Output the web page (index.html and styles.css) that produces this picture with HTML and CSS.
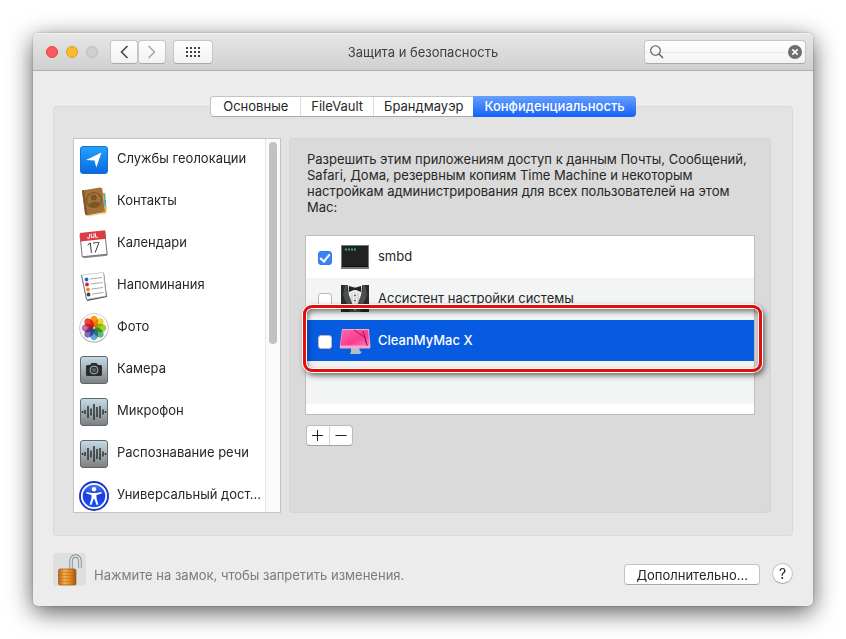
FILE: index.html
```html
<!DOCTYPE html>
<html lang="ru">
<head>
<meta charset="utf-8">
<meta name="viewport" content="width=device-width, initial-scale=1">
<title>Защита и безопасность</title>
<link rel="stylesheet" href="styles.css">
</head>
<body>
<main class="window">
  <header class="titlebar">
    <div class="tools">
      <div class="lights">
        <button class="light close" aria-label="Закрыть"></button>
        <button class="light minimize" aria-label="Свернуть"></button>
        <button class="light zoom" aria-label="Развернуть" disabled></button>
      </div>
      <div class="nav">
        <button class="tool" aria-label="Назад"><svg width="12" height="14" viewBox="0 0 12 14"><path d="M9.500 1 3.500 7l6 6" fill="none" stroke="#484848" stroke-width="1.600"/></svg></button>
        <button class="tool" aria-label="Вперед"><svg width="12" height="14" viewBox="0 0 12 14"><path d="M2.500 1l6 6-6 6" fill="none" stroke="#aaa" stroke-width="1.600"/></svg></button>
      </div>
      <button class="tool grid-button" aria-label="Показать все"><svg width="16" height="12" viewBox="0 0 16 12"><path d="M1 2h14M1 6h14M1 10h14" fill="none" stroke="#404040" stroke-width="2" stroke-dasharray="2 2"/></svg></button>
    </div>
    <h1 class="title">Защита и безопасность</h1>
    <div class="search">
      <svg width="14" height="14" viewBox="0 0 14 14"><circle cx="5.500" cy="5.500" r="4.800" fill="none" stroke="#555" stroke-width="1.100"/><path d="m9 9 4 4" stroke="#555" stroke-width="1.300"/></svg>
      <input type="text" aria-label="Поиск">
      <button class="clear" aria-label="Очистить"><svg width="14" height="14" viewBox="0 0 14 14"><circle cx="7" cy="7" r="7" fill="#6e6e6e"/><path d="m4.300 4.300 5.400 5.400m0-5.400-5.400 5.400" stroke="#fff" stroke-width="1.700"/></svg></button>
    </div>
  </header>

  <div class="content">
    <nav class="tabs">
      <button class="tab">Основные</button>
      <button class="tab">FileVault</button>
      <button class="tab">Брандмауэр</button>
      <button class="tab active">Конфиденциальность</button>
    </nav>

    <section class="group">
      <div class="sidebar">
        <ul class="services">
          <li><svg class="icon" viewBox="0 0 28 28"><defs><linearGradient id="geo" x2="0" y2="1"><stop stop-color="#22a3fb"/><stop offset="1" stop-color="#0a68e4"/></linearGradient></defs><rect x=".5" y=".5" width="27" height="27" rx="2.500" fill="url(#geo)" stroke="#1a72c8"/><path d="M21.500 6.500 6 14l8.500.5 1.800 7z" fill="#fff"/></svg><span>Службы геолокации</span></li>
          <li><svg class="icon" viewBox="0 0 28 28"><path d="m22 4 4 1 .5 17-3 4-2-1z" fill="#e9e4d5"/><path d="m23 5 2 .5.500 6-1.500-1z" fill="#62b15d"/><path d="m24 11 2 1v7l-1.500-1z" fill="#35a9cf"/><path d="m25 18 2 1-1 6-2 1z" fill="#f2bc24"/><path d="m2 2.500 18-3q2 0 2.300 1.500L25 24 7 27.500q-1.500 0-1.800-1.500z" fill="#a27339"/><path d="M2 2.500 4 2l3.500 25L5 26z" fill="#80552a"/><path d="m7 27.500 18-3v1.300L8 28.500z" fill="#eed68d"/><g transform="rotate(-7 14 12)"><circle cx="14" cy="12" r="7.500" fill="#a3733a" stroke="#7d5424" stroke-width="1.200"/><circle cx="14" cy="9.500" r="2.900" fill="#7d5424"/><path d="M8.500 16c1.500-3 9.500-3 11 0-2.500 4-8.500 4-11 0z" fill="#7d5424"/></g></svg><span>Контакты</span></li>
          <li><svg class="icon" viewBox="0 0 28 28"><g transform="rotate(-6 14 14)"><path d="M1 4h25v23H2z" fill="#888"/><path d="M1 4h25v21.500H1z" fill="#fff" stroke="#777"/><path d="M1 1.500h25.500V10H1z" fill="#dc3a44"/><text x="13.500" y="8" class="cal-month">JUL</text><text x="13.500" y="22.500" class="cal-day">17</text></g></svg><span>Календари</span></li>
          <li><svg class="icon" viewBox="0 0 28 28"><path d="M5 4 24 1l3 24-20 4z" fill="#444"/><path d="m1.500 3 22-2.500L26 24 6.500 27.500z" fill="#fff" stroke="#bbb" stroke-width=".7"/><path d="M1.500 3 6.500 27.500" stroke="#777"/><circle cx="6.500" cy="7.500" r="1.900" fill="#1c66de"/><circle cx="7" cy="12.500" r="1.900" fill="#d4222c"/><circle cx="8" cy="17.500" r="1.900" fill="#f38423"/><circle cx="8.500" cy="22.500" r="1.900" fill="#32415c"/><path d="m10 7 12-1.500M10.500 12 22.500 10.500M11.500 17 23 15.500M12 22l11.500-1.500" stroke="#aaa"/></svg><span>Напоминания</span></li>
          <li><svg class="icon" viewBox="0 0 28 28"><circle cx="14" cy="14" r="14.700" fill="#bbb"/><circle cx="14" cy="13.700" r="13.900" fill="#fafafa"/><g class="petals"><ellipse cx="14" cy="7.500" rx="4.200" ry="5.800" fill="#fb9a20"/><ellipse cx="14" cy="7.500" rx="4.200" ry="5.800" fill="#f0dc27" transform="rotate(45 14 14)"/><ellipse cx="14" cy="7.500" rx="4.200" ry="5.800" fill="#a9cf3d" transform="rotate(90 14 14)"/><ellipse cx="14" cy="7.500" rx="4.200" ry="5.800" fill="#58bd84" transform="rotate(135 14 14)"/><ellipse cx="14" cy="7.500" rx="4.200" ry="5.800" fill="#64a9e2" transform="rotate(180 14 14)"/><ellipse cx="14" cy="7.500" rx="4.200" ry="5.800" fill="#866ebc" transform="rotate(225 14 14)"/><ellipse cx="14" cy="7.500" rx="4.200" ry="5.800" fill="#cd6faa" transform="rotate(270 14 14)"/><ellipse cx="14" cy="7.500" rx="4.200" ry="5.800" fill="#f0483c" transform="rotate(315 14 14)"/></g></svg><span>Фото</span></li>
          <li><svg class="icon" viewBox="0 0 28 28"><defs><linearGradient id="steel" x2="0" y2="1"><stop stop-color="#c4dbe6"/><stop offset=".5" stop-color="#a5afb4"/><stop offset="1" stop-color="#7d7d7d"/></linearGradient></defs><rect x=".5" y=".5" width="27" height="27" rx="2.500" fill="url(#steel)" stroke="#5d686e"/><path d="M6 10.500q0-1.500 1.500-1.500H10l1.500-2h5L18 9h2.500q1.500 0 1.500 1.500v8q0 1.500-1.500 1.500h-13Q6 20 6 18.500z" fill="#2a2d2f"/><circle cx="14" cy="14" r="4" fill="#33383b" stroke="#a4aeb3"/><circle cx="14" cy="14" r="2" fill="#596167"/></svg><span>Камера</span></li>
          <li><svg class="icon" viewBox="0 0 28 28"><rect x=".5" y=".5" width="27" height="27" rx="2.500" fill="url(#steel)" stroke="#5d686e"/><path d="M2.500 13v2M5 12v4M8 8v12M11 10.500v7M14 6v16M17 9v10M20 8v12M23 11.500v5M25.500 13v2" stroke="#2c3033" stroke-width="1.500"/></svg><span>Микрофон</span></li>
          <li><svg class="icon" viewBox="0 0 28 28"><rect x=".5" y=".5" width="27" height="27" rx="2.500" fill="url(#steel)" stroke="#5d686e"/><path d="M2.500 13v2M5 12v4M8 8v12M11 10.500v7M14 6v16M17 9v10M20 8v12M23 11.500v5M25.500 13v2" stroke="#2c3033" stroke-width="1.500"/></svg><span>Распознавание речи</span></li>
          <li><svg class="icon" viewBox="0 0 28 28"><defs><linearGradient id="access" x2="0" y2="1"><stop stop-color="#4d84ea"/><stop offset=".45" stop-color="#1c3ce0"/><stop offset="1" stop-color="#1454f8"/></linearGradient></defs><circle cx="14" cy="14" r="15" fill="#1a33cf"/><circle cx="14" cy="14" r="12.200" fill="url(#access)" stroke="#fff" stroke-width="1.800"/><circle cx="14" cy="7.300" r="2.200" fill="#fff"/><path d="m6.500 10 5.300 1h4.400l5.300-1 .2 1.500-5.200 1.400v3l1.800 6.600-1.700.5L14.400 17h-.8l-2.200 6-1.700-.5 1.800-6.600v-3l-5.200-1.400z" fill="#fff"/></svg><span>Универсальный дост...</span></li>
        </ul>
        <div class="scrollbar"><div class="thumb"></div></div>
      </div>

      <div class="panel">
        <p class="note">Разрешить этим приложениям доступ к данным Почты, Сообщений, Safari, Дома, резервным копиям Time Machine и некоторым настройкам администрирования для всех пользователей на этом Mac:</p>
        <div class="apps">
          <label class="app"><input type="checkbox" checked><svg class="icon" viewBox="0 0 28 28"><path d="M0 2h28v24H0z" fill="#777"/><path d="M1 3h26v20H1z" fill="#202122"/><path d="M1 23h26v1H1z" fill="#111"/><path d="M4 6.500h11" stroke="#38ad58" stroke-width="2" stroke-dasharray="2 1"/></svg><span>smbd</span></label>
          <label class="app"><input type="checkbox"><svg class="icon" viewBox="0 0 28 28"><path d="M0 0h28v27H0z" fill="#292b2d"/><path d="M7 0h14l-1 17-6 10L8 17z" fill="#eee"/><path d="m4 0 3 0-1 5 7 18 1 4H9L2 10z" fill="#4c4f52"/><path d="m24 0-3 0 1 5-7 18-1 4h5l7-17z" fill="#4c4f52"/><path d="m8 1 5 1.500h2L20 1v6l-5-2h-2L8 7z" fill="#222"/><path d="M14 7v18M11 8v9M17 8v9" stroke="#aaa" stroke-width=".7"/><path d="M14 10v1m0 4v1" stroke="#222" stroke-width="1.300"/></svg><span>Ассистент настройки системы</span></label>
          <label class="app selected"><input type="checkbox"><svg class="icon mac" viewBox="0 0 32 28"><defs><linearGradient id="pink" x2="1" y2="1"><stop stop-color="#ff65ac"/><stop offset=".6" stop-color="#fc3c91"/><stop offset="1" stop-color="#f778b7"/></linearGradient></defs><path d="M12 20h8l1 4.500h2L21 27H11l1-2.500z" fill="#b5bdc9"/><path d="M3 2h27l1.500 18q0 1.500-1.500 1.500H2q-1.500 0-1.300-1.500z" fill="#f7a7c8"/><path d="M3.500 3H29l1.500 15.500h-29z" fill="url(#pink)"/><path d="m15 3 12 8M24 4l4 14.500M26 10l2 8.500" fill="none" stroke="#8d164f" stroke-width=".9"/></svg><span>CleanMyMac X</span><i class="callout"></i></label>
          <div class="app"></div>
        </div>
        <div class="segmented">
          <button aria-label="Добавить"><svg width="12" height="12" viewBox="0 0 12 12"><path d="M5.500 0v11M0 5.500h11" stroke="#222"/></svg></button>
          <button aria-label="Удалить"><svg width="12" height="12" viewBox="0 0 12 12"><path d="M.5 5.500h11" stroke="#222"/></svg></button>
        </div>
      </div>
    </section>

    <footer class="footer">
      <button class="lock" aria-label="Замок"><svg width="33" height="33" viewBox="0 0 33 33"><defs><linearGradient id="brass"><stop stop-color="#b66517"/><stop offset=".35" stop-color="#f4ae4a"/><stop offset=".7" stop-color="#dc8422"/><stop offset="1" stop-color="#9d510e"/></linearGradient></defs><path d="M18 16V9q0-6 4.500-6T27 9v6" fill="none" stroke="#7f8b95" stroke-width="3.400"/><path d="M18 16V9q0-6 4.500-6T27 9v6" fill="none" stroke="#dfe6ea" stroke-width="1.600"/><rect x="5.500" y="16" width="17.500" height="16" rx="1.500" fill="url(#brass)" stroke="#9d5a1a" stroke-width=".7"/><path d="M6 19.500h17M6 22.500h17M6 25.500h17M6 28.500h17" stroke="#b7691c" stroke-width=".5"/></svg></button>
      <span class="hint">Нажмите на замок, чтобы запретить изменения.</span>
      <button class="more">Дополнительно...</button>
      <button class="help" aria-label="Справка">?</button>
    </footer>
  </div>
</main>
</body>
</html>
```
FILE: styles.css
```css
* { box-sizing: border-box; }

body {
  margin: 0;
  padding: 33px;
  background: #fff;
  color: #262626;
  font: 13px/16px Inter, "Liberation Sans", sans-serif;
}

button, input { font: inherit; color: inherit; }

button {
  display: flex;
  align-items: center;
  justify-content: center;
  margin: 0;
  padding: 0;
  border: 0;
}

svg { display: block; flex: none; }

.window {
  border-radius: 5px;
  background: #ececec;
  box-shadow: 0 6px 24px rgba(0, 0, 0, .65), 0 0 2px rgba(0, 0, 0, .3);
}

.titlebar {
  display: grid;
  grid-template-columns: 1fr auto 1fr;
  align-items: center;
  height: 38px;
  padding: 0 7px;
  border-top: 1px solid #f3f3f3;
  border-bottom: 1px solid #adadad;
  border-radius: 5px 5px 0 0;
  background: linear-gradient(#e6e6e6, #d0d0d0);
}

.tools { display: flex; align-items: center; padding-left: 6px; }
.lights { display: flex; gap: 8px; margin-right: 12px; }

.light {
  width: 12px;
  height: 12px;
  border: 1px solid #bdbdbd;
  border-radius: 50%;
  background: #cfcfcf;
}

.close { border-color: #df4348; background: #fc5b5f; }
.minimize { border-color: #dca023; background: #fdbc2f; }

.nav { display: flex; margin-right: 7px; }

.tool {
  width: 28px;
  height: 24px;
  border: 1px solid #c6c6c6;
  border-bottom-color: #aaa;
  border-radius: 4px;
  background: linear-gradient(#fefefe, #f2f2f2);
}

.grid-button { width: 40px; }

.title {
  margin: 0;
  color: #404040;
  font-size: 13px;
  font-weight: 400;
}

.search {
  display: flex;
  align-items: center;
  justify-self: end;
  width: 162px;
  height: 24px;
  padding: 0 3px 0 5px;
  border: 1px solid #c6c6c6;
  border-bottom-color: #aaa;
  border-radius: 4px;
  background: linear-gradient(#e9e9e9, #e9e9e9) 0 11px / 100% 1px no-repeat, linear-gradient(#fefefe, #f3f3f3);
}

.search input {
  flex: 1;
  min-width: 0;
  height: 20px;
  border: 0;
  outline: 0;
  background: none;
}

.clear { background: none; }

.content { padding: 25px 20px 20px; }

.tabs {
  position: relative;
  display: flex;
  width: max-content;
  margin: 0 auto -11px;
  border: 1px solid #c3c3c3;
  border-bottom-color: #a8a8a8;
  border-radius: 4px;
  background: #fff;
}

.tab {
  height: 19px;
  padding: 0 10px 2px;
  border-right: 1px solid #ddd;
  background: none;
}

.tab:first-child { padding: 0 12px 2px; }

.tab.active {
  margin: -1px;
  height: 21px;
  padding: 0 11px 2px;
  border: 0;
  border-radius: 0 4px 4px 0;
  background: linear-gradient(#66a0fc, #1461fb);
  color: #fff;
  font-weight: 500;
}

.group {
  display: flex;
  gap: 8px;
  padding: 31px 21px 22px 19px;
  border: 1px solid #d9d9d9;
  border-radius: 4px;
  background: #e3e3e3;
}

.sidebar {
  display: flex;
  flex: none;
  width: 208px;
  height: 375px;
  border: 1px solid #c4c4c4;
  background: #fff;
  overflow: hidden;
}

.services {
  flex: 1;
  min-width: 0;
  margin: 0;
  padding: 0;
  list-style: none;
}

.services li {
  display: flex;
  align-items: center;
  gap: 9px;
  height: 42px;
  padding-left: 6px;
  white-space: nowrap;
}

.services span { padding-bottom: 5px; }
.app span { padding-bottom: 3px; }

.icon { width: 28px; height: 28px; overflow: visible; }
.petals, .petals ellipse { mix-blend-mode: multiply; }

.cal-month {
  fill: #fff;
  font-size: 6px;
  font-weight: 700;
  text-anchor: middle;
}

.cal-day {
  fill: #333;
  font-size: 14px;
  font-weight: 300;
  text-anchor: middle;
}

.scrollbar {
  flex: none;
  width: 15px;
  padding: 3px;
  border-left: 1px solid #e6e6e6;
  background: #fafafa;
}

.thumb {
  width: 8px;
  height: 202px;
  border-radius: 4px;
  background: #c1c1c1;
}

.panel {
  flex: 1;
  min-width: 0;
  padding: 12px 15px;
  border: 1px solid #d4d4d4;
  border-radius: 4px;
  background: #dadada;
}

.note { margin: 0 0 20px 2px; }

.apps {
  height: 180px;
  border: 1px solid #bfbfbf;
  background: #fff;
}

.app {
  position: relative;
  display: flex;
  align-items: center;
  height: 42px;
  padding-left: 12px;
}

.app:nth-child(even) { background: #f3f5f5; }

.app.selected {
  background: linear-gradient(#065be0, #065be0) 0 0 / 100% 41px no-repeat #f3f5f5;
  color: #fff;
  font-weight: 500;
}

.app input {
  width: 14px;
  height: 14px;
  margin: 2px 9px 0 0;
  border: 1px solid #b9b9b9;
  border-radius: 3px;
  background: #fff;
  appearance: none;
}

.app input:checked {
  display: grid;
  place-items: center;
  border-color: #3579ee;
  background: #3b82f6;
}

.app input:checked::before {
  width: 4px;
  height: 8px;
  margin-bottom: 2px;
  border: solid #fff;
  border-width: 0 2px 2px 0;
  content: "";
  transform: rotate(40deg);
}

.app .icon { margin-right: 9px; }
.app .mac { width: 32px; margin: 0 7px 0 -2px; }

.callout {
  position: absolute;
  inset: -15px -8px -10px -3px;
  z-index: 1;
  border: 3px solid #e30d0b;
  border-radius: 9px;
  box-shadow: 0 0 0 1px #fff, inset 0 0 0 1px #fff, 2px 3px 6px rgba(0, 0, 0, .65), inset 1px 3px 6px rgba(0, 0, 0, .6);
  pointer-events: none;
}

.segmented {
  display: flex;
  width: max-content;
  margin: 10px 0 0 1px;
  border: 1px solid #bcbcbc;
  border-bottom-color: #9f9f9f;
  border-radius: 4px;
  background: #fff;
}

.segmented button {
  width: 22px;
  height: 19px;
  background: none;
}

.segmented button + button {
  width: 23px;
  border-left: 1px solid #d4d4d4;
}

.footer {
  display: flex;
  align-items: center;
  margin-top: 17px;
}

.lock {
  width: 33px;
  height: 33px;
  border-radius: 4px;
  background: #dfdfdf;
}

.hint {
  flex: 1;
  padding: 10px 0 0 8px;
  color: #7b7b7b;
}

.more {
  height: 21px;
  margin: 10px 12px 0 0;
  padding: 0 11px;
  border: 1px solid #c3c3c3;
  border-bottom-color: #a8a8a8;
  border-radius: 4px;
  background: #fff;
}

.help {
  width: 21px;
  height: 21px;
  margin-top: 8px;
  border: 1px solid #c3c3c3;
  border-bottom-color: #a8a8a8;
  border-radius: 50%;
  background: #fff;
  font-size: 14px;
}
```
